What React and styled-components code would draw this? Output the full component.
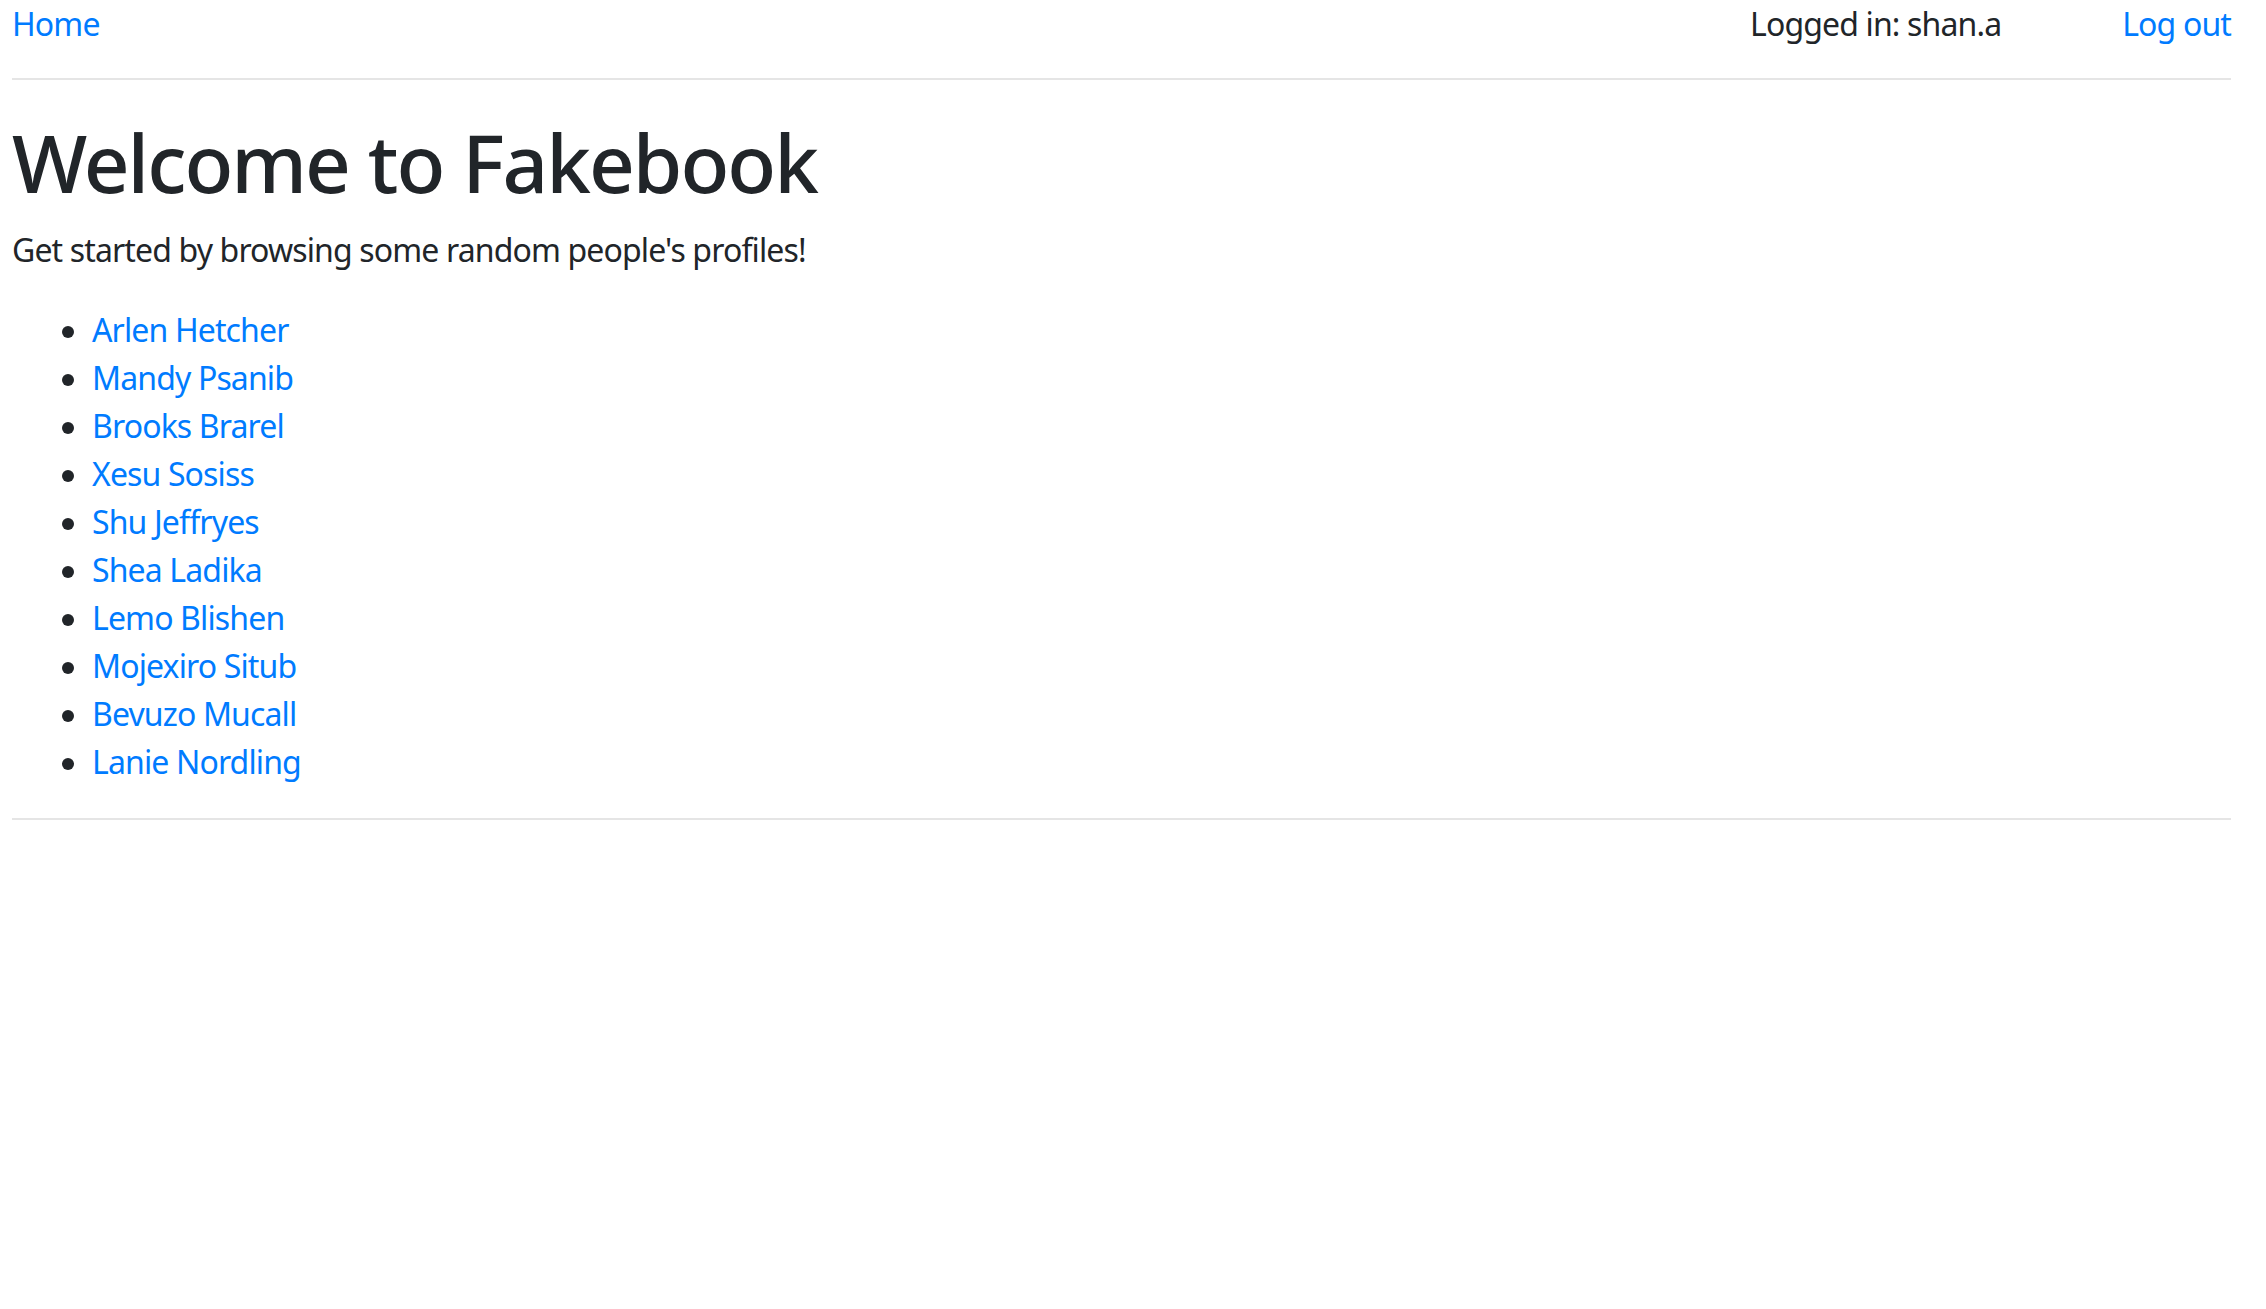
import React from "react";
import styled, { createGlobalStyle } from "styled-components";

const GlobalStyle = createGlobalStyle`
  html, body {
    margin: 0;
    padding: 0;
    background: #ffffff;
  }
  body {
    font-family: "Segoe UI", "Noto Sans", "Open Sans", sans-serif;
    font-size: 32px;
    line-height: 48px;
    letter-spacing: -0.027em;
    color: #212529;
  }
  * { box-sizing: border-box; }
`;

const Page = styled.div`
  padding: 0 35px 0 12px;
`;

const Nav = styled.nav`
  display: flex;
  justify-content: space-between;
  align-items: baseline;
  height: 48px;
`;

const RightGroup = styled.div`
  display: flex;
  align-items: baseline;
  gap: 121px;
`;

const Link = styled.a`
  color: #007bff;
  text-decoration: none;
  cursor: pointer;
`;

const UserText = styled.span`
  color: #212529;
`;

const Rule = styled.hr`
  border: 0;
  border-top: 2px solid rgba(0, 0, 0, 0.1);
  margin: ${(p) => p.$top}px 0 ${(p) => p.$bottom}px;
  height: 0;
`;

const Title = styled.h1`
  font-size: 80px;
  font-weight: 500;
  line-height: 96px;
  letter-spacing: -0.025em;
  margin: 0 0 16px;
`;

const Lead = styled.p`
  margin: 0 0 32px;
`;

const PeopleList = styled.ul`
  margin: 0 0 32px;
  padding-left: 80px;
  list-style: none;
`;

const Person = styled.li`
  &::before {
    content: "";
    display: inline-block;
    width: 12px;
    height: 12px;
    border-radius: 50%;
    background: #212529;
    margin-left: -30px;
    margin-right: 18px;
    vertical-align: 4px;
  }
`;

const people = [
  "Arlen Hetcher",
  "Mandy Psanib",
  "Brooks Brarel",
  "Xesu Sosiss",
  "Shu Jeffryes",
  "Shea Ladika",
  "Lemo Blishen",
  "Mojexiro Situb",
  "Bevuzo Mucall",
  "Lanie Nordling",
];

export default function App() {
  return (
    <>
      <GlobalStyle />
      <Page>
        <Nav>
          <Link href="#">Home</Link>
          <RightGroup>
            <UserText>Logged in: shan.a</UserText>
            <Link href="#">Log out</Link>
          </RightGroup>
        </Nav>
        <Rule $top={30} $bottom={34} />
        <Title>Welcome to Fakebook</Title>
        <Lead>Get started by browsing some random people's profiles!</Lead>
        <PeopleList>
          {people.map((name) => (
            <Person key={name}>
              <Link href="#">{name}</Link>
            </Person>
          ))}
        </PeopleList>
        <Rule $top={0} $bottom={32} />
      </Page>
    </>
  );
}
